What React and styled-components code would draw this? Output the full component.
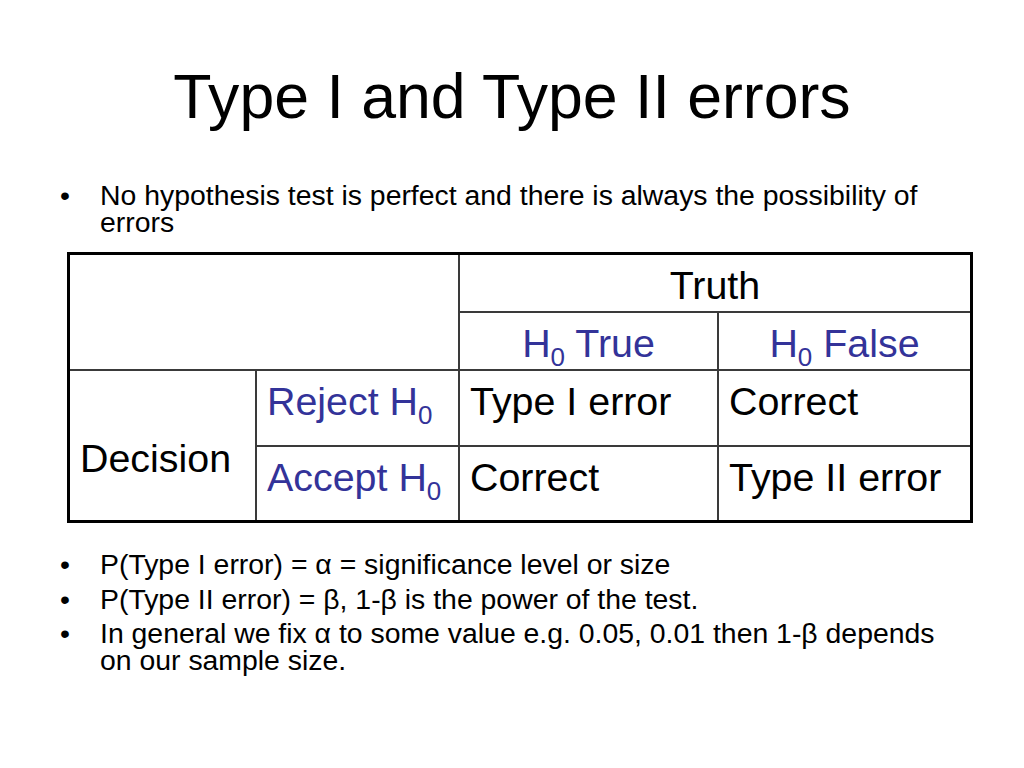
import React from "react";
import styled, { createGlobalStyle } from "styled-components";

const GlobalStyle = createGlobalStyle`
  html, body {
    margin: 0;
    padding: 0;
    background: #ffffff;
  }
  body {
    font-family: "Liberation Sans", Arial, sans-serif;
    color: #000000;
  }
`;

const Slide = styled.div`
  width: 1024px;
  height: 768px;
  box-sizing: border-box;
  padding-top: 65px;
  background: #ffffff;
  overflow: hidden;
`;

const Title = styled.h1`
  margin: 0;
  font-weight: normal;
  font-size: 62.6px;
  line-height: 62px;
  text-align: center;
`;

const BulletList = styled.ul`
  list-style: none;
  margin: ${(p) => p.$top}px 0 0 0;
  padding: 0 0 0 60px;
  width: 962px;
  box-sizing: border-box;
`;

const BulletItem = styled.li`
  display: flex;
  font-size: 28.4px;
  line-height: 26.7px;
  & + & {
    margin-top: 7.6px;
  }
`;

const Dot = styled.span`
  flex: 0 0 40px;
`;

const BulletText = styled.span`
  flex: 1;
`;

const Grid = styled.div`
  margin: 17px 0 0 67px;
  width: 906px;
  box-sizing: border-box;
  border: 3px solid #000;
  background: #3a3a3a;
  display: grid;
  grid-template-columns: 185px 201px 257px 251px;
  grid-template-rows: 56px 56px 74px 73px;
  gap: 2px;
`;

const Cell = styled.div`
  background: #ffffff;
  box-sizing: border-box;
  font-size: 39.4px;
  line-height: 45px;
  padding: ${(p) => p.$padTop ?? 8}px 10px 0 10px;
  text-align: ${(p) => (p.$center ? "center" : "left")};
  color: ${(p) => (p.$blue ? "#333399" : "#000000")};
  grid-column: ${(p) => p.$col || "auto"};
  grid-row: ${(p) => p.$row || "auto"};
  white-space: nowrap;
`;

const Sub = styled.sub`
  font-size: 0.66em;
  vertical-align: -0.34em;
  line-height: 0;
`;

const H0 = () => (
  <>
    H<Sub>0</Sub>
  </>
);

export default function App() {
  return (
    <>
      <GlobalStyle />
      <Slide>
        <Title>Type I and Type II errors</Title>
        <BulletList $top={55}>
          <BulletItem>
            <Dot>•</Dot>
            <BulletText>
              No hypothesis test is perfect and there is always the possibility of errors
            </BulletText>
          </BulletItem>
        </BulletList>
        <Grid>
          <Cell $col="1 / span 2" $row="1 / span 2" />
          <Cell $col="3 / span 2" $row="1" $center>
            Truth
          </Cell>
          <Cell $col="3" $row="2" $center $blue>
            <H0 /> True
          </Cell>
          <Cell $col="4" $row="2" $center $blue>
            <H0 /> False
          </Cell>
          <Cell $col="1" $row="3 / span 2" $padTop={65}>
            Decision
          </Cell>
          <Cell $col="2" $row="3" $blue>
            Reject <H0 />
          </Cell>
          <Cell $col="3" $row="3">
            Type I error
          </Cell>
          <Cell $col="4" $row="3">
            Correct
          </Cell>
          <Cell $col="2" $row="4" $blue>
            Accept <H0 />
          </Cell>
          <Cell $col="3" $row="4">
            Correct
          </Cell>
          <Cell $col="4" $row="4">
            Type II error
          </Cell>
        </Grid>
        <BulletList $top={28}>
          <BulletItem>
            <Dot>•</Dot>
            <BulletText>P(Type I error) = α = significance level or size</BulletText>
          </BulletItem>
          <BulletItem>
            <Dot>•</Dot>
            <BulletText>P(Type II error) = β, 1-β is the power of the test.</BulletText>
          </BulletItem>
          <BulletItem>
            <Dot>•</Dot>
            <BulletText>
              In general we fix α to some value e.g. 0.05, 0.01 then 1-β depends on our sample size.
            </BulletText>
          </BulletItem>
        </BulletList>
      </Slide>
    </>
  );
}
